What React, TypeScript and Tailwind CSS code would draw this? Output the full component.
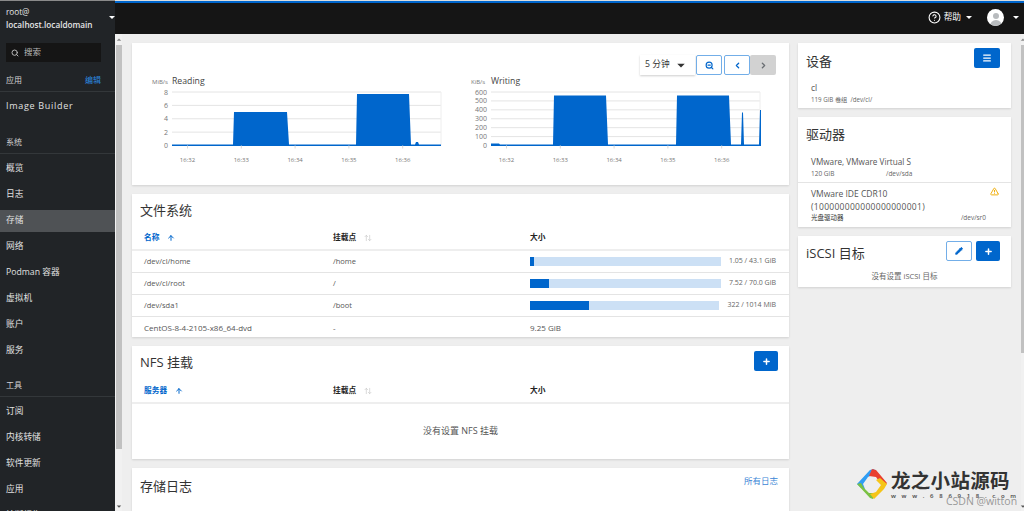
import { ChevronLeft, ChevronRight, Menu, Pencil, Plus, Search, ZoomOut, TriangleAlert, ArrowUp, ArrowUpDown, CircleHelp } from 'lucide-react';

const FONT = "font-['Open_Sans','Noto_Sans_CJK_SC',sans-serif]";

type Fs = { name: string; mount: string; pct: number; label: string };

const FILESYSTEMS: Fs[] = [
  { name: '/dev/cl/home', mount: '/home', pct: 2.1, label: '1.05 / 43.1 GiB' },
  { name: '/dev/cl/root', mount: '/', pct: 10.2, label: '7.52 / 70.0 GiB' },
  { name: '/dev/sda1', mount: '/boot', pct: 31, label: '322 / 1014 MiB' },
];

function Caret({ className = '' }: { className?: string }) {
  return <span className={`inline-block h-0 w-0 border-x-[3px] border-t-[3px] border-x-transparent border-t-current ${className}`} />;
}

function NavItem({ label, active, wide }: { label: string; active?: boolean; wide?: boolean }) {
  return (
    <div className="h-[26px] py-[2px]">
      <div className={`flex h-[22px] items-center px-[6px] text-[#e0e0e0] ${wide ? 'text-[9px] tracking-[0.7px]' : 'text-[8.7px]'} ${active ? 'bg-[#4f5255]' : ''}`}>
        {label}
      </div>
    </div>
  );
}

function NavHead({ label, edit }: { label: string; edit?: boolean }) {
  return (
    <div className="flex h-[22px] items-center justify-between border-b border-[#33373a] px-[6px] pb-[1px] text-[8px] text-[#d2d2d2]">
      <span>{label}</span>
      {edit && <span className="pr-[8px] text-[#2b8ae0]">编辑</span>}
    </div>
  );
}

function Sidebar() {
  return (
    <aside className="flex h-full w-[115px] shrink-0 flex-col overflow-hidden bg-[#212427]">
      <div className="flex h-[34px] shrink-0 items-center justify-between border-t border-[#8a8a8a] pl-[6px]">
        <div className="text-[8.2px] leading-[13px] text-[#e6e6e6]">
          <div>root@</div>
          <div className="font-semibold">localhost.localdomain</div>
        </div>
        <Caret className="text-white" />
      </div>
      <div className="ml-[6px] mt-[9px] flex h-[19px] w-[95px] shrink-0 items-center gap-[5px] bg-[#151515] pl-[5px] text-[8.5px] text-[#b8b8b8]">
        <Search size={8} strokeWidth={3} />
        <span>搜索</span>
      </div>
      <div className="mt-[8px] shrink-0">
        <NavHead label="应用" edit />
        <div className="mt-[1px]"><NavItem label="Image Builder" wide /></div>
      </div>
      <div className="mt-[13px] shrink-0">
        <NavHead label="系统" />
        <div className="mt-[2px]">
          {['概览', '日志'].map((l) => <NavItem key={l} label={l} />)}
          <NavItem label="存储" active />
          {['网络', 'Podman 容器', '虚拟机', '账户', '服务'].map((l) => <NavItem key={l} label={l} />)}
        </div>
      </div>
      <div className="mt-[11px] shrink-0">
        <NavHead label="工具" />
        <div className="mt-[2px]">
          {['订阅', '内核转储', '软件更新', '应用', '诊断报告'].map((l) => <NavItem key={l} label={l} />)}
        </div>
      </div>
    </aside>
  );
}

function TopBar() {
  return (
    <header className="flex h-[34px] shrink-0 items-center justify-end border-t border-t-[#dddddd] bg-[#151515] shadow-[inset_0_2px_0_#0066cc] text-white">
      <CircleHelp size={13} strokeWidth={2} className="mr-[3px]" />
      <span className="text-[8.7px]">帮助</span>
      <Caret className="ml-[5px]" />
      <div className="ml-[15px] flex h-[17px] w-[17px] flex-col items-center justify-end overflow-hidden rounded-full bg-white">
        <span className="h-[6px] w-[6px] rounded-full bg-[#b8bbbe]" />
        <span className="mt-[1px] h-[6px] w-[12px] rounded-t-full bg-[#b8bbbe]" />
      </div>
      <Caret className="ml-[9px] mr-[5px]" />
    </header>
  );
}

type ChartProps = {
  title: string;
  unit: string;
  ticks: string[];
  left: number;
  width: number;
  area: string;
};

const TIMES = ['16:32', '16:33', '16:34', '16:35', '16:36'];

// plot is 269 wide, top 17 to bottom 70.5 in svg coords
function Chart({ title, unit, ticks, left, width, area }: ChartProps) {
  const right = left + 269;
  const top = 17;
  const bottom = 70.5;
  const step = (bottom - top) / (ticks.length - 1);
  return (
    <svg width={width} height={92} className="block shrink-0">
      <text x={left - 20} y={9} fontSize={6} fill="#777">{unit}</text>
      <text x={left} y={9} fontSize={8.7} fill="#444">{title}</text>
      {ticks.map((t, i) => (
        <g key={t}>
          <line x1={left} x2={right} y1={top + i * step} y2={top + i * step} stroke="#e4e4e4" strokeWidth={1} />
          <text x={left - 4} y={top + i * step + 2.5} fontSize={7} fill="#777" textAnchor="end">{t}</text>
        </g>
      ))}
      <line x1={right} x2={right} y1={top} y2={bottom} stroke="#eeeeee" />
      <path d={area} fill="#0066cc" />
      {TIMES.map((t, i) => (
        <g key={t}>
          <line x1={left + 15.5 + i * 53.8} x2={left + 15.5 + i * 53.8} y1={bottom} y2={bottom + 3} stroke="#d8d8d8" />
          <text x={left + 15.5 + i * 53.8} y={87} fontSize={6} fill="#777" textAnchor="middle">{t}</text>
        </g>
      ))}
    </svg>
  );
}

function FsHeader({ first }: { first: string }) {
  return (
    <div className="grid h-[24px] grid-cols-[189px_197px_1fr] items-center border-b-2 border-[#eeeeee] pl-[12px] text-[7.7px] font-semibold text-[#222]">
      <div className="flex items-center text-[#0066cc]">
        <span>{first}</span>
        <ArrowUp size={8} strokeWidth={3} className="ml-[8px]" />
      </div>
      <div className="flex items-center">
        <span>挂载点</span>
        <ArrowUpDown size={8} className="ml-[8px] text-[#c8c8c8]" />
      </div>
      <div>大小</div>
    </div>
  );
}

function IconBtn({ children, outline, gray, narrow }: { children: React.ReactNode; outline?: boolean; gray?: boolean; narrow?: boolean }) {
  const tone = gray
    ? 'bg-[#d2d2d2] text-[#6a6e73]'
    : outline
      ? 'border border-[#73aee8] bg-white text-[#0066cc]'
      : 'bg-[#0066cc] text-white';
  return <div className={`flex h-[20px] items-center justify-center rounded-[2px] ${narrow ? 'w-[24px]' : 'w-[26px]'} ${tone}`}>{children}</div>;
}

function Card({ children, className = '' }: { children: React.ReactNode; className?: string }) {
  return <section className={`bg-white shadow-[0_1px_2px_rgba(0,0,0,0.12)] ${className}`}>{children}</section>;
}

function Title({ children }: { children: React.ReactNode }) {
  return <h2 className="text-[13px] leading-[18px] text-[#333]">{children}</h2>;
}

function Main() {
  return (
    <div className="flex w-[657px] shrink-0 flex-col gap-[9px]">
      <Card className="h-[142px] shrink-0">
        <div className="flex h-[32px] items-end justify-end gap-[2px] pr-[13px]">
          <div className="-mr-[1px] flex h-[20px] w-[55px] items-center justify-between pl-[5px] pr-[11px] text-[8.7px] text-[#333] shadow-[0_1px_2px_rgba(0,0,0,0.2)]">
            <span>5 分钟</span>
            <Caret className="scale-125" />
          </div>
          <IconBtn outline><ZoomOut size={9} strokeWidth={3} /></IconBtn>
          <IconBtn outline><ChevronLeft size={9} strokeWidth={3.5} /></IconBtn>
          <div className="-ml-[2px]"><IconBtn gray><ChevronRight size={9} strokeWidth={3.5} /></IconBtn></div>
        </div>
        <div className="flex">
          <Chart
            title="Reading"
            unit="MiB/s"
            ticks={['8', '6', '4', '2', '0']}
            left={40}
            width={320}
            area="M40 69.5H101L102 37H155L157 69.5H224L225 19H277L279 69.5H283L284 67H286L287 69.5H309V71H40Z"
          />
          <Chart
            title="Writing"
            unit="KiB/s"
            ticks={['600', '500', '400', '300', '200', '100', '0']}
            left={39}
            width={325}
            area="M39 68.5H47L48 69.5H101L102 20.5H154L156 69.5H224L225 20.5H277L279 69.5H289L290 37.5L291 37.5L292 69.5H307L308 35H309V71H39Z"
          />
        </div>
      </Card>

      <Card className="h-[143px] shrink-0">
        <div className="pl-[8px] pt-[7px]"><Title>文件系统</Title></div>
        <div className="mt-[8px]"><FsHeader first="名称" /></div>
        {FILESYSTEMS.map((f) => (
          <div key={f.name} className="grid h-[22px] grid-cols-[189px_197px_1fr] items-center border-b border-[#e4e4e4] pl-[12px] text-[7.5px] text-[#555]">
            <div>{f.name}</div>
            <div>{f.mount}</div>
            <div className="flex items-center gap-[8px] pr-[13px]">
              <div className="h-[9px] flex-1 bg-[#cce0f5]">
                <div className="h-full bg-[#0066cc]" style={{ width: `${f.pct}%` }} />
              </div>
              <span className="text-[7px] text-[#666]">{f.label}</span>
            </div>
          </div>
        ))}
        <div className="grid h-[21px] grid-cols-[189px_197px_1fr] items-center pl-[12px] text-[8px] text-[#555]">
          <div>CentOS-8-4-2105-x86_64-dvd</div>
          <div>-</div>
          <div>9.25 GiB</div>
        </div>
      </Card>

      <Card className="h-[113px] shrink-0">
        <div className="flex items-start justify-between pl-[8px] pr-[11px] pt-[5px]">
          <div className="pt-[2px]"><Title>NFS 挂载</Title></div>
          <IconBtn narrow><Plus size={9} strokeWidth={4} /></IconBtn>
        </div>
        <div className="mt-[9px]"><FsHeader first="服务器" /></div>
        <div className="flex h-[53px] items-center justify-center text-[9px] text-[#555]">没有设置 NFS 挂载</div>
      </Card>

      <Card className="h-[60px] shrink-0">
        <div className="flex items-start justify-between pl-[8px] pr-[11px] pt-[8px]">
          <div className="pt-[1px]"><Title>存储日志</Title></div>
          <span className="text-[8.5px] leading-[9px] text-[#3b86d6]">所有日志</span>
        </div>
      </Card>
    </div>
  );
}

function Aside() {
  return (
    <div className="flex w-[213px] shrink-0 flex-col gap-[9px]">
      <Card className="h-[65px]">
        <div className="flex items-start justify-between pl-[8px] pr-[11px] pt-[5px]">
          <div className="pt-[4px]"><Title>设备</Title></div>
          <IconBtn><Menu size={10} strokeWidth={3} /></IconBtn>
        </div>
        <div className="pl-[13px] pt-[12px] text-[8.5px] leading-[12px] text-[#555]">cl</div>
        <div className="pl-[13px] pt-[1px] text-[6.2px] leading-[10px] text-[#666]">119 GiB 卷组 &nbsp;/dev/cl/</div>
      </Card>

      <Card className="h-[110px]">
        <div className="pl-[8px] pt-[8px]"><Title>驱动器</Title></div>
        <div className="mt-[13px] h-[27px] border-b border-[#e4e4e4] px-[13px]">
          <div className="text-[8.2px] leading-[12px] text-[#555]">VMware, VMware Virtual S</div>
          <div className="mt-[1px] grid grid-cols-[75px_1fr] text-[6.5px] leading-[9px] text-[#666]">
            <span>120 GiB</span>
            <span>/dev/sda</span>
          </div>
        </div>
        <div className="relative px-[13px] pt-[4px]">
          <div className="text-[8.5px] leading-[13px] text-[#555]">VMware IDE CDR10</div>
          <div className="text-[8.5px] leading-[13px] tracking-[0.3px] text-[#555]">(100000000000000000001)</div>
          <div className="flex justify-between pr-[12px] text-[6.5px] leading-[10px] text-[#666]">
            <span className="text-[#333]">光盘驱动器</span>
            <span>/dev/sr0</span>
          </div>
          <TriangleAlert size={9} strokeWidth={2.5} className="absolute right-[12px] top-[4px] text-[#f0ab00]" />
        </div>
      </Card>

      <Card className="h-[51px]">
        <div className="flex items-start justify-between pl-[8px] pr-[11px] pt-[5px]">
          <div className="pt-[3px]"><Title>iSCSI 目标</Title></div>
          <div className="flex gap-[4px]">
            <IconBtn outline><Pencil size={8} strokeWidth={3} fill="currentColor" /></IconBtn>
            <IconBtn narrow><Plus size={9} strokeWidth={4} /></IconBtn>
          </div>
        </div>
        <div className="pt-[8px] text-center text-[7.5px] leading-[12px] text-[#666]">没有设置 iSCSI 目标</div>
      </Card>
    </div>
  );
}

function ScrollBar({ thumb, w }: { thumb: number; w: string }) {
  return (
    <div className={`flex h-full shrink-0 flex-col items-end justify-between bg-[#f1f1f1] ${w}`}>
      <div className="w-full">
        <div className="flex h-[11px] items-center justify-center">
          <Caret className="rotate-180 scale-75 text-[#888]" />
        </div>
        <div className="ml-auto w-[6px] max-w-full bg-[#c1c1c1]" style={{ height: thumb }} />
      </div>
      <div className="flex h-[9px] w-full items-center justify-center">
        <Caret className="scale-75 text-[#555]" />
      </div>
    </div>
  );
}

function Watermark() {
  return (
    <div className="pointer-events-none absolute bottom-0 right-0 h-[48px] w-[174px]">
      <svg width="32" height="32" viewBox="0 0 32 32" className="absolute left-[6px] top-[5px]">
        <path d="M1 16L14 2L18 1L20 5L12 9L7 16L9 21L5 20Z" fill="#2f9df4" />
        <path d="M16 1L20 2L31 15L27 21L25 16L20 9L13 8Z" fill="#e9402f" />
        <path d="M1 16L5 15L8 20L13 25L20 25L17 31L14 30Z" fill="#7ac143" />
        <path d="M31 16L28 21L18 31L14 26L20 24L25 17L20 12L24 10Z" fill="#f5c518" />
      </svg>
      <div className="absolute left-[41px] top-[5px] font-['Noto_Sans_CJK_SC',serif] text-[19.5px] font-bold leading-[24px] tracking-[0.3px] text-[#333]">龙之小站源码</div>
      <div className="absolute left-[41px] top-[29px] text-[6px] font-semibold leading-[8px] tracking-[5.7px] text-[#444]">www.686918.com</div>
      <div className="absolute left-[96px] top-[32px] text-[10.5px] leading-[13px] text-[#999]">CSDN @witton</div>
    </div>
  );
}

export default function App() {
  return (
    <div className={`relative flex h-[511px] w-[1024px] overflow-hidden bg-[#eeeeee] ${FONT}`}>
      <Sidebar />
      <div className="flex min-w-0 flex-1 flex-col">
        <TopBar />
        <div className="flex min-h-0 flex-1">
          <ScrollBar thumb={404} w="w-[7px]" />
          <div className="flex flex-1 items-start gap-[9px] overflow-hidden pl-[10px] pt-[9px]">
            <Main />
            <Aside />
          </div>
          <ScrollBar thumb={308} w="w-[3px]" />
        </div>
      </div>
      <Watermark />
    </div>
  );
}
